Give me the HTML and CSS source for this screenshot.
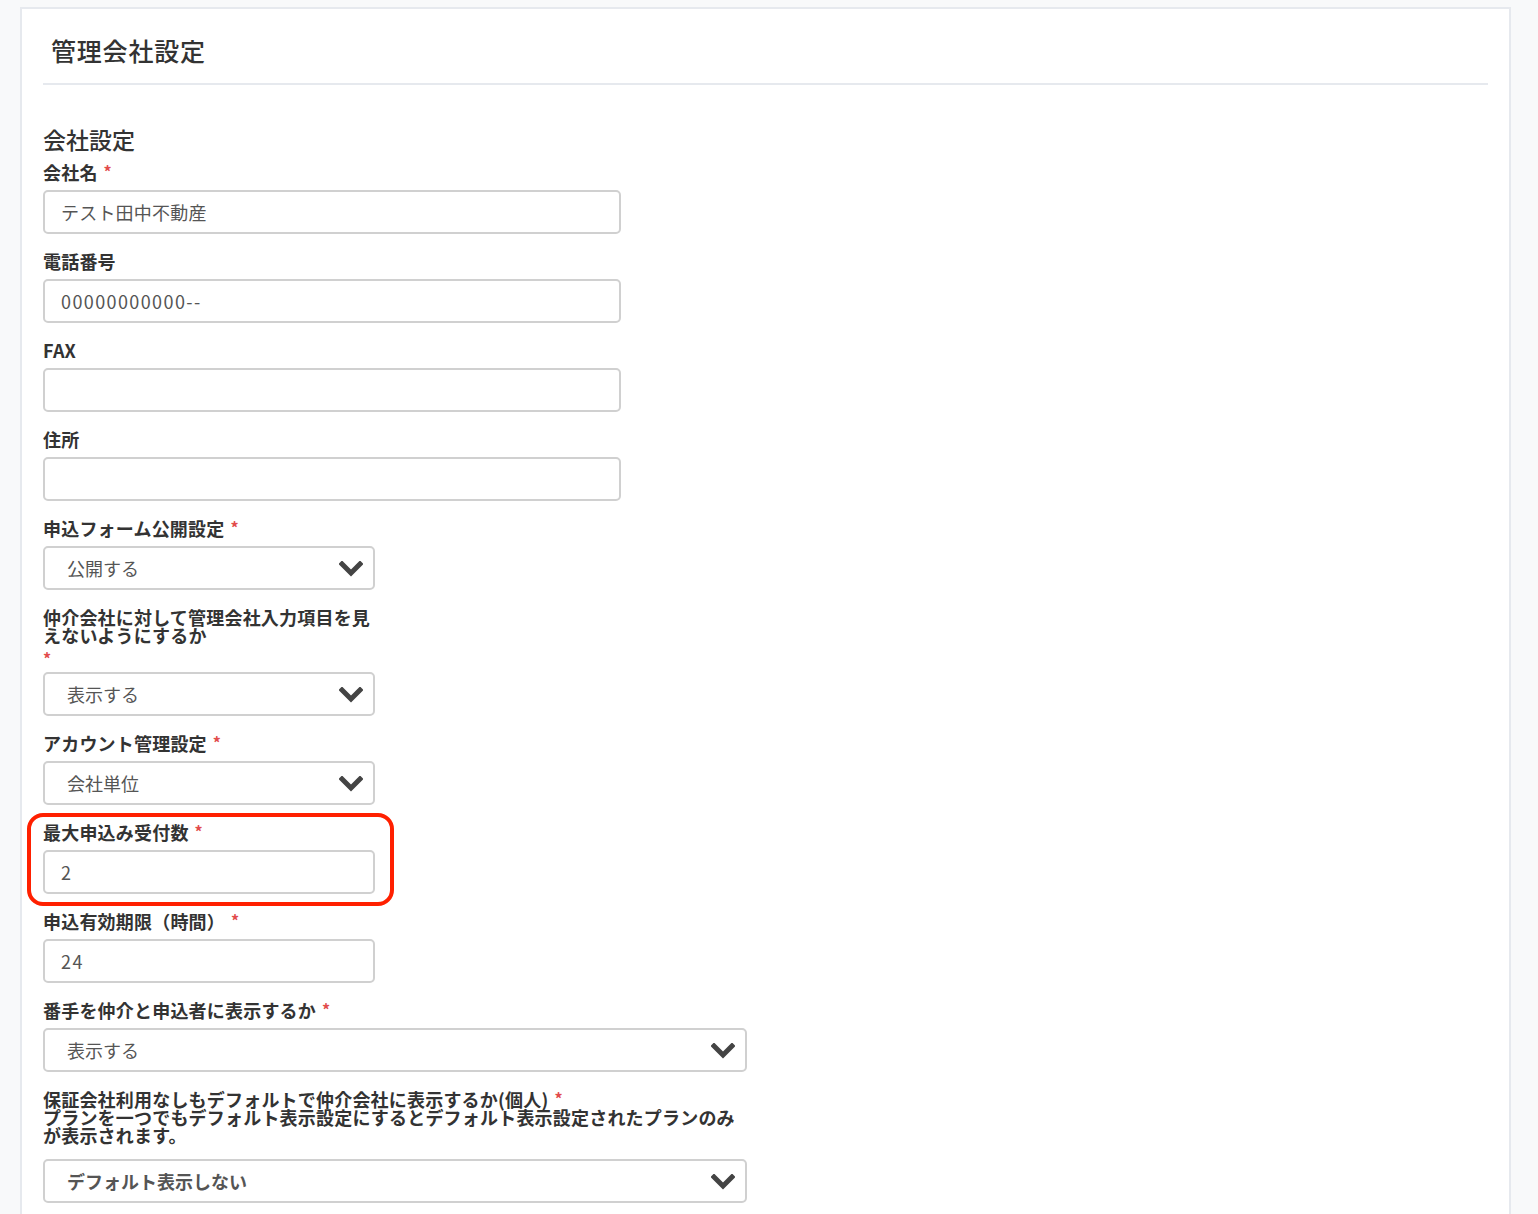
FILE: index.html
```html
<!DOCTYPE html>
<html lang="ja">
<head>
<meta charset="utf-8">
<title>管理会社設定</title>
<link rel="stylesheet" href="styles.css">
</head>
<body>
<div class="card">
  <div class="card-header"><h1 class="title">管理会社設定</h1></div>
  <div class="card-body">
    <h2 class="section-title">会社設定</h2>

    <div class="field wide">
      <label class="label">会社名<span class="req">*</span></label>
      <div class="control">テスト田中不動産</div>
    </div>

    <div class="field wide">
      <label class="label">電話番号</label>
      <div class="control num">00000000000--</div>
    </div>

    <div class="field wide">
      <label class="label">FAX</label>
      <div class="control"></div>
    </div>

    <div class="field wide">
      <label class="label">住所</label>
      <div class="control"></div>
    </div>

    <div class="field narrow">
      <label class="label">申込フォーム公開設定<span class="req">*</span></label>
      <div class="control select"><span>公開する</span><svg class="chev" viewBox="0 0 24 16"><polyline points="3,3 12,12 21,3"/></svg></div>
    </div>

    <div class="field narrow">
      <label class="label">仲介会社に対して管理会社入力項目を見<br>えないようにするか<span class="req-line"><span class="req low">*</span></span></label>
      <div class="control select"><span>表示する</span><svg class="chev" viewBox="0 0 24 16"><polyline points="3,3 12,12 21,3"/></svg></div>
    </div>

    <div class="field narrow">
      <label class="label">アカウント管理設定<span class="req">*</span></label>
      <div class="control select"><span>会社単位</span><svg class="chev" viewBox="0 0 24 16"><polyline points="3,3 12,12 21,3"/></svg></div>
    </div>

    <div class="field narrow highlighted">
      <label class="label">最大申込み受付数<span class="req">*</span></label>
      <div class="control num">2</div>
      <div class="highlight-ring"></div>
    </div>

    <div class="field narrow">
      <label class="label">申込有効期限（時間）<span class="req">*</span></label>
      <div class="control num">24</div>
    </div>

    <div class="field medium">
      <label class="label">番手を仲介と申込者に表示するか<span class="req">*</span></label>
      <div class="control select"><span>表示する</span><svg class="chev" viewBox="0 0 24 16"><polyline points="3,3 12,12 21,3"/></svg></div>
    </div>

    <div class="field medium">
      <label class="label tall">保証会社利用なしもデフォルトで仲介会社に表示するか(個人)<span class="req">*</span><br>プランを一つでもデフォルト表示設定にするとデフォルト表示設定されたプランのみ<br>が表示されます。</label>
      <div class="control select"><span class="strong">デフォルト表示しない</span><svg class="chev" viewBox="0 0 24 16"><polyline points="3,3 12,12 21,3"/></svg></div>
    </div>
  </div>
</div>
</body>
</html>
```
FILE: styles.css
```css
* { box-sizing: border-box; }
html, body {
  margin: 0;
  padding: 0;
  background: #f8f9fa;
  font-family: "Noto Sans CJK JP", "Noto Sans", sans-serif;
  color: #333;
}
.card {
  margin: 7px 0 0 20px;
  width: 1491px;
  background: #fff;
  border: 2px solid #e6e9ee;
  border-bottom: none;
  padding: 0 21px 40px 21px;
  min-height: 1300px;
}
.card-header {
  padding: 25px 0 17px 8px;
  border-bottom: 2px solid #e6e9ee;
}
.title {
  margin: 0;
  font-size: 25px;
  line-height: 32px;
  font-weight: 500;
  color: #333;
  letter-spacing: 0.8px;
}
.card-body { padding-top: 40px; }
.section-title {
  margin: 0 0 10px 0;
  font-size: 23px;
  line-height: 28px;
  font-weight: 500;
  color: #333;
}
.field {
  margin-bottom: 18px;
  position: relative;
}
.field.wide { width: 578px; }
.field.narrow { width: 332px; }
.field.medium { width: 704px; }
.label {
  display: block;
  font-size: 18px;
  line-height: 18px;
  font-weight: 700;
  color: #333;
  margin-bottom: 9px;
  white-space: nowrap;
  letter-spacing: 0.2px;
}
.label.tall { margin-bottom: 15px; }
.req {
  color: #e24c4c;
  font-size: 16px;
  line-height: 0;
  font-weight: 700;
  margin-left: 6px;
  vertical-align: 2px;
}
.req-line {
  display: block;
  height: 19px;
  line-height: 19px;
}
.req.low {
  margin-left: 0;
  vertical-align: -4px;
}
.control {
  height: 44px;
  border: 2px solid #d0d0d0;
  border-radius: 5px;
  background: #fff;
  padding: 0 16px;
  font-size: 18px;
  line-height: 40px;
  color: #555;
  display: flex;
  align-items: center;
  letter-spacing: 0.2px;
}
.control.num { letter-spacing: 1.4px; }
.control.select {
  padding: 0 10px 0 22px;
  justify-content: space-between;
  letter-spacing: 0;
}
.strong { font-weight: 700; color: #555; }
.chev {
  width: 24px;
  height: 16px;
  flex: none;
  margin-top: 2px;
}
.chev polyline {
  fill: none;
  stroke: #444;
  stroke-width: 5;
  stroke-linecap: square;
}
.highlight-ring {
  position: absolute;
  left: -16px;
  top: -10px;
  right: -19px;
  bottom: -12px;
  border: 4px solid #ff2000;
  border-radius: 16px;
  pointer-events: none;
}
```
